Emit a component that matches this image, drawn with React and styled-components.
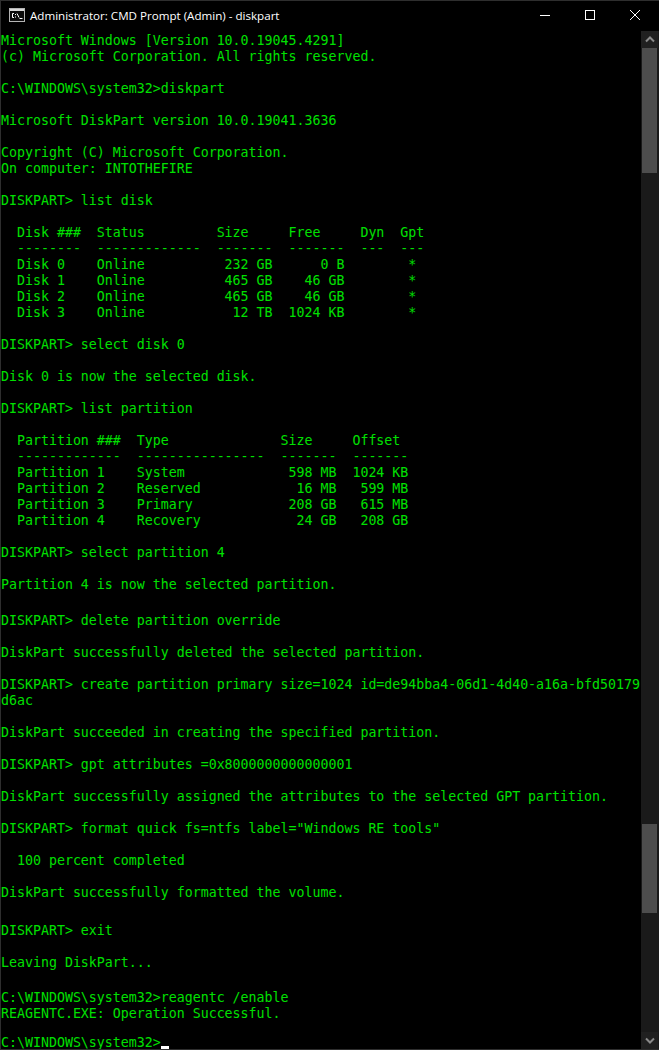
import styled, { createGlobalStyle } from 'styled-components';

const GlobalStyle = createGlobalStyle`
  html, body {
    margin: 0;
    background: #000;
  }
`;

// row text, plus the extra gap above it where the capture was stitched
const lines = [
  ['Microsoft Windows [Version 10.0.19045.4291]'],
  ['(c) Microsoft Corporation. All rights reserved.'],
  [''],
  ['C:\\WINDOWS\\system32>diskpart'],
  [''],
  ['Microsoft DiskPart version 10.0.19041.3636'],
  [''],
  ['Copyright (C) Microsoft Corporation.'],
  ['On computer: INTOTHEFIRE'],
  [''],
  ['DISKPART> list disk'],
  [''],
  ['  Disk ###  Status         Size     Free     Dyn  Gpt'],
  ['  --------  -------------  -------  -------  ---  ---'],
  ['  Disk 0    Online          232 GB      0 B        *'],
  ['  Disk 1    Online          465 GB    46 GB        *'],
  ['  Disk 2    Online          465 GB    46 GB        *'],
  ['  Disk 3    Online           12 TB  1024 KB        *'],
  [''],
  ['DISKPART> select disk 0'],
  [''],
  ['Disk 0 is now the selected disk.'],
  [''],
  ['DISKPART> list partition'],
  [''],
  ['  Partition ###  Type              Size     Offset'],
  ['  -------------  ----------------  -------  -------'],
  ['  Partition 1    System             598 MB  1024 KB'],
  ['  Partition 2    Reserved            16 MB   599 MB'],
  ['  Partition 3    Primary            208 GB   615 MB'],
  ['  Partition 4    Recovery            24 GB   208 GB'],
  [''],
  ['DISKPART> select partition 4'],
  [''],
  ['Partition 4 is now the selected partition.'],
  [''],
  ['DISKPART> delete partition override', 4],
  [''],
  ['DiskPart successfully deleted the selected partition.'],
  [''],
  ['DISKPART> create partition primary size=1024 id=de94bba4-06d1-4d40-a16a-bfd50179'],
  ['d6ac'],
  [''],
  ['DiskPart succeeded in creating the specified partition.'],
  [''],
  ['DISKPART> gpt attributes =0x8000000000000001'],
  [''],
  ['DiskPart successfully assigned the attributes to the selected GPT partition.'],
  [''],
  ['DISKPART> format quick fs=ntfs label="Windows RE tools"'],
  [''],
  ['  100 percent completed'],
  [''],
  ['DiskPart successfully formatted the volume.'],
  [''],
  ['DISKPART> exit', 6],
  [''],
  ['Leaving DiskPart...'],
  [''],
  ['C:\\WINDOWS\\system32>reagentc /enable', 3],
  ['REAGENTC.EXE: Operation Successful.'],
];

function App() {
  return (
    <>
      <GlobalStyle />
      <Window>
        <TitleBar>
          <CmdIcon viewBox="0 0 16 14">
            <rect x="0.5" y="0.5" width="15" height="13" fill="#0c0c0c" stroke="#b4b4b4" />
            <rect x="1" y="1" width="14" height="2" fill="#d8d8d8" />
            <path d="M5 5.5H3.5v4H5" fill="none" stroke="#fff" />
            <path d="M6.5 6v1M6.5 8.5v1" stroke="#fff" />
            <path d="M8 5.5l2 4" stroke="#fff" />
            <path d="M10.5 10.5h3" stroke="#fff" />
          </CmdIcon>
          <Title>Administrator: CMD Prompt (Admin) - diskpart</Title>
          <Controls>
            <CaptionButton>
              <svg width="10" height="10" viewBox="0 0 10 10">
                <path d="M0 5.5h10" stroke="#fff" />
              </svg>
            </CaptionButton>
            <CaptionButton>
              <svg width="10" height="10" viewBox="0 0 10 10">
                <rect x="0.5" y="0.5" width="9" height="9" fill="none" stroke="#fff" />
              </svg>
            </CaptionButton>
            <CaptionButton>
              <svg width="10" height="10" viewBox="0 0 10 10">
                <path d="M0 0l10 10M10 0L0 10" stroke="#fff" />
              </svg>
            </CaptionButton>
          </Controls>
        </TitleBar>
        <Body>
          <Console>
            {lines.map(([text, gap], i) => (
              <Line key={i} $gap={gap}>
                {text}
              </Line>
            ))}
            <Line $gap={13}>
              C:\WINDOWS\system32&gt;
              <Cursor />
            </Line>
          </Console>
          <Scrollbar>
            <ArrowButton>
              <svg width="10" height="7" viewBox="0 0 10 7">
                <path d="M1 5.5l4-4 4 4" fill="none" stroke="#8a8a8a" strokeWidth="2" />
              </svg>
            </ArrowButton>
            <Thumb $height={125} />
            <Track $height={651} />
            <Thumb $height={89} />
            <Track />
            <ArrowButton>
              <svg width="10" height="7" viewBox="0 0 10 7">
                <path d="M1 1.5l4 4 4-4" fill="none" stroke="#8a8a8a" strokeWidth="2" />
              </svg>
            </ArrowButton>
          </Scrollbar>
        </Body>
      </Window>
    </>
  );
}

const Window = styled.div`
  display: flex;
  flex-direction: column;
  width: 659px;
  height: 1050px;
  overflow: hidden;
  box-sizing: border-box;
  background: #000;
  border-top: 1px solid #2e2e2e;
  border-left: 1px solid #2e2e2e;
  border-bottom: 1px solid #2e2e2e;
`;

const TitleBar = styled.div`
  display: flex;
  align-items: center;
  flex: none;
  box-sizing: border-box;
  height: 30px;
  padding: 0 2px 2px 8px;
  color: #fff;
`;

const CmdIcon = styled.svg`
  width: 16px;
  height: 14px;
  margin-right: 5px;
`;

const Title = styled.div`
  flex: 1;
  font-family: 'Open Sans', sans-serif;
  font-size: 11.6px;
  white-space: nowrap;
`;

const Controls = styled.div`
  display: flex;
`;

const CaptionButton = styled.div`
  display: flex;
  align-items: center;
  justify-content: center;
  width: 45px;
  height: 28px;
`;

const Body = styled.div`
  display: flex;
  flex: 1;
  min-height: 0;
`;

const Console = styled.div`
  flex: 1;
  min-width: 0;
  overflow: hidden;
  padding-top: 2px;
  font-family: 'DejaVu Sans Mono', monospace;
  font-size: 13.28px;
  color: #00e000;
`;

const Line = styled.div`
  height: 16px;
  line-height: 16px;
  margin-top: ${props => props.$gap || 0}px;
  white-space: pre;
`;

const Cursor = styled.span`
  display: inline-block;
  width: 8px;
  height: 4px;
  vertical-align: -3px;
  background: #fff;
`;

const Scrollbar = styled.div`
  display: flex;
  flex-direction: column;
  flex: none;
  width: 18px;
  padding-right: 1px;
  box-sizing: border-box;
  background: #1a1a1a;
`;

const ArrowButton = styled.div`
  display: flex;
  align-items: center;
  justify-content: center;
  flex: none;
  height: 17px;
  background: #202020;
`;

const Thumb = styled.div`
  flex: none;
  height: ${props => props.$height}px;
  margin: 0 1px;
  background: #4d4d4d;
`;

const Track = styled.div`
  flex: ${props => (props.$height ? 'none' : 1)};
  height: ${props => (props.$height ? `${props.$height}px` : 'auto')};
`;

export default App;
